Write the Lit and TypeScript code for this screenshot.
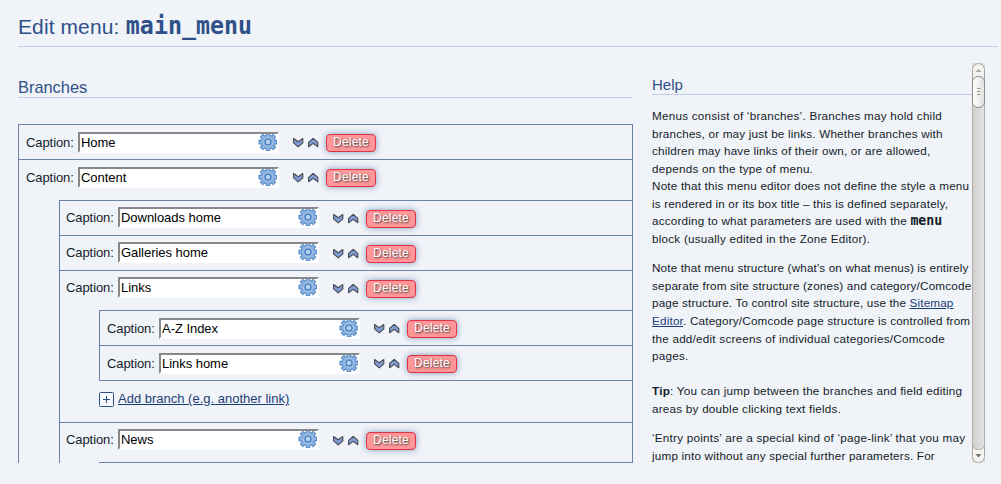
import { LitElement, html, css, svg, nothing } from "lit";
import { customElement, property } from "lit/decorators.js";

interface Branch {
  caption: string;
  children?: Branch[];
  addLink?: boolean;
}

const BRANCHES: Branch[] = [
  { caption: "Home" },
  {
    caption: "Content",
    children: [
      { caption: "Downloads home" },
      { caption: "Galleries home" },
      {
        caption: "Links",
        addLink: true,
        children: [{ caption: "A-Z Index" }, { caption: "Links home" }],
      },
      { caption: "News", children: [] },
    ],
  },
];

// Outline of a cog with squared teeth, centred on 10,10.
function cogPath(teeth: number, outer: number, inner: number): string {
  const points: string[] = [];
  const step = (Math.PI * 2) / teeth;
  for (let i = 0; i < teeth; i++) {
    const mid = i * step - Math.PI / 2;
    for (const [offset, r] of [[-0.3, inner], [-0.25, outer], [0.25, outer], [0.3, inner]]) {
      const a = mid + offset * step;
      points.push(`${(10 + r * Math.cos(a)).toFixed(2)} ${(10 + r * Math.sin(a)).toFixed(2)}`);
    }
  }
  return `M${points.join("L")}Z`;
}
const COG = cogPath(8, 9.1, 7);

@customElement("menu-branch")
class MenuBranch extends LitElement {
  @property({ attribute: false }) branch!: Branch;
  @property({ type: Number }) level = 1;

  static styles = css`
    :host { display: block; border-top: 1px solid #6c82aa; }
    .row { display: flex; align-items: flex-start; height: 27px; padding: 7px 0 0 7px; }
    .label { width: 52px; line-height: 21px; white-space: nowrap; color: #141c28; letter-spacing: -.08px; }
    .field {
      display: flex; justify-content: space-between; box-sizing: border-box;
      width: 201px; height: 21px; background: #fff; color: #000; overflow: hidden;
      border: 2px solid; border-color: #888 #fff #fff #888; padding-left: 1px; line-height: 17px;
      letter-spacing: -.04px;
    }
    .cog { display: block; width: 20px; height: 20px; margin: -2px -.5px 0 0; flex: none; }
    .arrows { display: flex; gap: 4px; margin: 6px 0 0 14px; }
    .arrow { width: 11px; height: 10px; display: block; }
    .delete {
      box-sizing: border-box; width: 50px; height: 18px; margin: 2px 0 0 7px;
      border: 1px solid #e03345; border-radius: 4px; background: #ff9799; color: #fff;
      font-size: 12px; letter-spacing: .2px; line-height: 15px; text-align: center;
      box-shadow: 0 0 6px rgba(60, 95, 150, .6); text-shadow: 1px 1px 2px #333;
    }
    .l2 .label, .l2 .field { margin-top: -1px; }
    .l2 { padding-left: 6px; }
    .children { border-left: 1px solid #6c82aa; margin-left: 40px; margin-top: 5px; }
    .l1-children { margin-top: 6px; }
    .l2-children { margin-left: 39px; }
    .l2-children.closed { border-bottom: 1px solid #6c82aa; }
    .empty { border-top: 1px solid #6c82aa; height: 10px; }
    .add { display: flex; align-items: center; height: 15px; margin: 11px 0 15px 39px; color: #1b4078; }
    .plus { width: 15px; height: 15px; margin-right: 4px; display: block; }
    .link { text-decoration: underline; white-space: nowrap; line-height: 13px; margin-top: -2px; }
  `;

  private cog() {
    return html`<svg class="cog" viewBox="0 0 20 20">
      <path d=${COG} fill="#8cb2df" stroke="#5c90cc" stroke-width="1.2" stroke-linejoin="round"></path>
      <circle cx="10" cy="10" r="4.800" fill="none" stroke="#a0c2e8" stroke-width="1"></circle>
      <circle cx="10" cy="10" r="2.900" fill="#b9d2ee" stroke="#4a80c0" stroke-width="1.300"></circle>
    </svg>`;
  }

  private arrow(up: boolean) {
    return html`<svg class="arrow" viewBox="0 0 11 10">
      ${svg`<path transform=${up ? "matrix(1 0 0 -1 0 9.2)" : "translate(0 0)"}
        d="M.6 .5L5.200 3.800L9.800 .5V4.900L5.200 8.900L.6 4.900Z" fill="#7e9bd4" stroke="#4a4b52"
        stroke-width="1.1" stroke-linejoin="round"></path>`}
    </svg>`;
  }

  render() {
    const { caption, children, addLink } = this.branch;
    return html`
      <div class="row l${this.level}">
        <span class="label">Caption:</span>
        <div class="field"><span>${caption}</span>${this.cog()}</div>
        <div class="arrows">${this.arrow(false)}${this.arrow(true)}</div>
        <div class="delete">Delete</div>
      </div>
      ${children
        ? html`<div class="children l${this.level}-children ${addLink ? "closed" : ""}">
            ${children.length
              ? children.map((c) => html`<menu-branch .branch=${c} .level=${this.level + 1}></menu-branch>`)
              : html`<div class="empty"></div>`}
          </div>`
        : nothing}
      ${addLink
        ? html`<div class="add">
            <svg class="plus" viewBox="0 0 15 15">
              <rect x=".5" y=".5" width="14" height="14" rx="1" fill="#f8fafd" stroke="#2c4f87"></rect>
              <path d="M4 7.5H11M7.5 4V11" stroke="#2c4f87"></path>
            </svg>
            <span class="link">Add branch (e.g. another link)</span>
          </div>`
        : nothing}
    `;
  }
}

@customElement("app-root")
class AppRoot extends LitElement {
  static styles = css`
    :host {
      display: block; box-sizing: border-box; width: 1001px; height: 484px; overflow: hidden;
      padding: 0 3px 0 18px; background: #f0f3f8; color: #141c28;
      font: 13px "Liberation Sans", Arial, sans-serif;
    }
    h1, h2, p { margin: 0; font-weight: normal; }
    h1, h2 { box-sizing: border-box; color: #2f5088; border-bottom: 1px solid #bfcde6; white-space: nowrap; }
    h1 { height: 47px; font-size: 21px; line-height: 54px; letter-spacing: .1px; }
    h1 .name {
      display: inline-block; margin-left: .5px; font: bold 23.3px/1 "DejaVu Sans Mono", monospace;
      letter-spacing: 0; transform: scaleY(1.1); transform-origin: 0 84.6%;
    }
    .columns { display: flex; height: 416px; }
    .branches { width: 615px; overflow: hidden; }
    .branches h2 { height: 51px; width: 614px; font-size: 16.4px; line-height: 80px; }
    .tree { box-sizing: border-box; margin-top: 26px; border: solid #6c82aa; border-width: 0 1px; height: 339px; overflow: hidden; }
    .help { width: 320px; margin-left: 19px; overflow: hidden; font-size: 11.7px; line-height: 17.55px; }
    .help h2 { height: 48px; font-size: 15px; line-height: 75px; margin-bottom: 12px; }
    .help p { white-space: nowrap; margin-bottom: 12px; }
    .help p.wide { margin-bottom: 17.5px; }
    .line { display: block; height: 17.55px; letter-spacing: .19px; }
    .loose { letter-spacing: .23px; }
    .tight { letter-spacing: .15px; }
    .code {
      display: inline-block; font: bold 13.2px/1 "DejaVu Sans Mono", monospace; letter-spacing: 0;
      transform: scaleY(1.12); transform-origin: 0 84.6%;
    }
    .link { color: #1b4078; text-decoration: underline; }
    .scroll { display: block; width: 13px; height: 400px; margin-top: 16px; }
  `;

  private para(lines: [unknown, string?][], cls = "") {
    return html`<p class=${cls}>${lines.map(([text, fit]) => html`<span class="line ${fit ?? ""}">${text}</span>`)}</p>`;
  }

  render() {
    return html`
      <h1>Edit menu: <span class="name">main_menu</span></h1>
      <div class="columns">
        <section class="branches">
          <h2>Branches</h2>
          <div class="tree">
            ${BRANCHES.map((b) => html`<menu-branch .branch=${b}></menu-branch>`)}
          </div>
        </section>
        <section class="help">
          <h2>Help</h2>
          ${this.para([
            ["Menus consist of ‘branches’. Branches may hold child", "loose"],
            ["branches, or may just be links. Whether branches with"],
            ["children may have links of their own, or are allowed,"],
            ["depends on the type of menu.", "loose"],
            ["Note that this menu editor does not define the style a menu"],
            ["is rendered in or its box title – this is defined separately,", "tight"],
            [html`according to what parameters are used with the <span class="code">menu</span>`],
            ["block (usually edited in the Zone Editor).", "loose"],
          ])}
          ${this.para([
            ["Note that menu structure (what's on what menus) is entirely", "tight"],
            ["separate from site structure (zones) and category/Comcode"],
            [html`page structure. To control site structure, use the <span class="link">Sitemap</span>`, "tight"],
            [html`<span class="link">Editor</span>. Category/Comcode page structure is controlled from`],
            ["the add/edit screens of individual categories/Comcode", "loose"],
            ["pages.", "loose"],
          ], "wide")}
          ${this.para([
            [html`<b>Tip</b>: You can jump between the branches and field editing`, "loose"],
            ["areas by double clicking text fields.", "loose"],
          ])}
          ${this.para([
            ["‘Entry points’ are a special kind of ‘page-link’ that you may", "loose"],
            ["jump into without any special further parameters. For"],
          ])}
        </section>
        <svg class="scroll" viewBox="0 0 13 400">
          <defs>
            <linearGradient id="track"><stop offset="0" stop-color="#d2d0ce"></stop><stop offset="1" stop-color="#e6e4e2"></stop></linearGradient>
            <linearGradient id="thumb"><stop offset="0" stop-color="#fff"></stop><stop offset="1" stop-color="#e4e2e0"></stop></linearGradient>
          </defs>
          <rect width="13" height="400" fill="#dfddda"></rect>
          <rect x=".5" y=".5" width="12" height="399" rx="6" fill="#f4f3f2" stroke="#aaa6a2"></rect>
          <path d="M.5 20V381Q.5 386.500 6.500 386.500T12.500 381V20Z" fill="url(#track)" stroke="#b3afab"></path>
          <rect x=".5" y="13.500" width="12" height="31" rx="5.500" fill="url(#thumb)" stroke="#8f8b87"></rect>
          <path d="M5 25.500H8.500M5 28.500H8.500M5 31.500H8.500" stroke="#99958f"></path>
          <path d="M3.500 9L6.500 6L9.500 9Z" fill="#aaa7a3"></path>
          <path d="M3.500 391L6.500 394.500L9.500 391Z" fill="#73706c"></path>
        </svg>
      </div>
    `;
  }
}
